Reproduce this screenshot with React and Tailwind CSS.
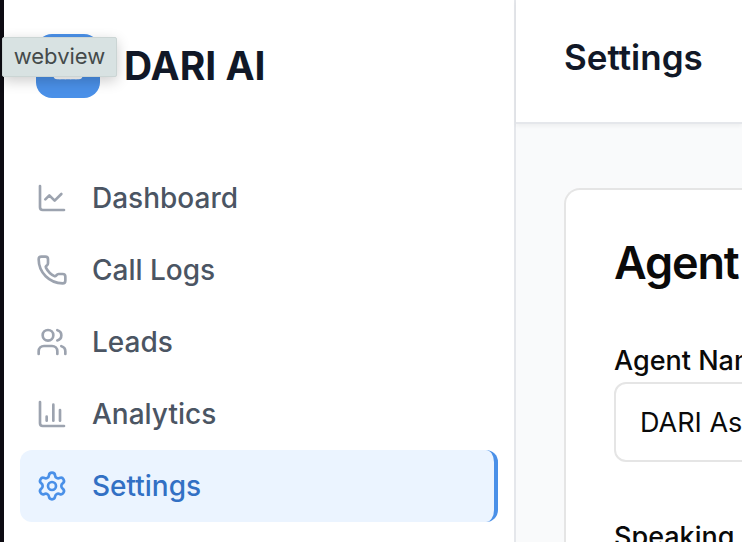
import { ChartLine, Phone, Users, ChartColumn, Settings, Building2 } from 'lucide-react';

const items = [
  { label: 'Dashboard', Icon: ChartLine },
  { label: 'Call Logs', Icon: Phone },
  { label: 'Leads', Icon: Users },
  { label: 'Analytics', Icon: ChartColumn },
  { label: 'Settings', Icon: Settings, active: true },
];

function NavItem({ label, Icon, active }) {
  return (
    <a
      href="#"
      aria-current={active ? 'page' : undefined}
      className={
        active
          ? 'flex h-18 items-center gap-6 rounded-xl border-r-4 border-[#4a90e8] bg-[#ebf4ff] px-4 text-[#3270c4]'
          : 'flex h-18 items-center gap-6 rounded-xl px-4 text-[#4b5563]'
      }
    >
      <Icon size={32} className={active ? 'shrink-0 text-[#4a90e8]' : 'shrink-0 text-[#9ca3af]'} />
      <span className="text-[28px] leading-10 font-medium">{label}</span>
    </a>
  );
}

export default function App() {
  return (
    <div className="flex h-screen overflow-hidden bg-white font-['Inter',sans-serif]">
      <div className="w-1 shrink-0 bg-[#0d0b12]" />
      <aside className="w-128 shrink-0 border-r-2 border-[#e5e7eb]">
        <div className="relative flex h-33 items-center gap-6 px-8">
          <div className="flex size-16 items-center justify-center rounded-2xl bg-[#4a90e8]">
            <Building2 size={32} className="text-white" />
          </div>
          <span className="text-[39px] font-bold text-[#111827]">DARI AI</span>
          <div
            role="tooltip"
            className="absolute -left-0.5 top-[37px] flex h-10 w-[115px] items-center justify-center rounded-xs border border-[#cbd5d4] bg-[#d8e2e2] pb-0.5 text-[22px] leading-8 text-[#444a4a] shadow-[0_4px_14px_rgba(0,0,0,0.2)]"
          >
            webview
          </div>
        </div>
        <nav className="px-4 pt-[30px]">
          {items.map((item) => (
            <NavItem key={item.label} {...item} />
          ))}
        </nav>
      </aside>
      <div className="flex min-w-0 flex-1 flex-col bg-[#f9fafb]">
        <header className="flex h-31 shrink-0 items-center border-b-2 border-[#e5e7eb] bg-white px-12 pb-2 shadow-[0_2px_4px_rgba(0,0,0,0.05)]">
          <h1 className="text-[35px] font-semibold text-[#111827]">Settings</h1>
        </header>
        <main className="min-h-0 flex-1 overflow-hidden pl-12 pt-16">
          <section className="h-full rounded-tl-2xl border-l-2 border-t-2 border-[#e5e5e5] bg-white pl-12 pt-12 text-[#0a0a0a]">
            <h2 className="whitespace-nowrap text-[45px] leading-[50px] font-semibold tracking-tight">Agent Configuration</h2>
            <label htmlFor="agent" className="mt-14 block whitespace-nowrap pb-1 text-[27px] leading-[34px] font-medium">
              Agent Name
            </label>
            <input
              id="agent"
              defaultValue="DARI Assistant"
              className="block h-20 w-96 rounded-xl border-2 border-[#e5e5e5] px-6 text-[27px]"
            />
            <label htmlFor="speed" className="mt-14 block whitespace-nowrap pb-1 text-[27px] leading-[38px] font-medium">
              Speaking Speed
            </label>
            <input id="speed" type="range" className="block w-96" />
          </section>
        </main>
      </div>
    </div>
  );
}
